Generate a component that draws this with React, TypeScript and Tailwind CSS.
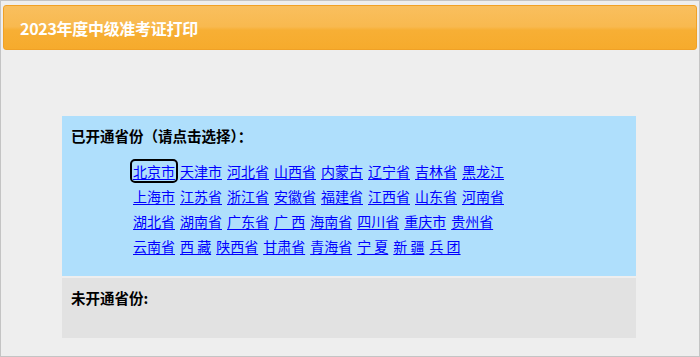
import React from "react";

const rows: string[][] = [
  ["北京市", "天津市", "河北省", "山西省", "内蒙古", "辽宁省", "吉林省", "黑龙江"],
  ["上海市", "江苏省", "浙江省", "安徽省", "福建省", "江西省", "山东省", "河南省"],
  ["湖北省", "湖南省", "广东省", "广\u00a0西", "海南省", "四川省", "重庆市", "贵州省"],
  ["云南省", "西\u00a0藏", "陕西省", "甘肃省", "青海省", "宁\u00a0夏", "新\u00a0疆", "兵\u00a0团"],
];

export default function App() {
  return (
    <div
      className="w-[700px] h-[357px] box-border border border-[#c4c4c4] bg-[#eeeeee] overflow-hidden"
      style={{ fontFamily: '"Noto Sans CJK SC", "Noto Sans", sans-serif' }}
    >
      <div className="pt-[4px] px-[2px]">
        <div className="h-[45px] rounded-[3px] border border-[#f0a126] bg-[linear-gradient(to_bottom,#f9bf5e_0%,#f8b94f_48%,#f7af35_56%,#f6ab2c_100%)] flex items-center pl-[16px]">
          <span className="text-white font-bold text-[16px] leading-none tracking-[-0.3px]">
            2023年度中级准考证打印
          </span>
        </div>
      </div>

      <div className="ml-[61px] mt-[66px] w-[574px]">
        <div className="h-[160px] bg-[#afdffc] pt-[10px] pl-[9px]">
          <div className="text-[14.5px] font-bold text-black leading-[20px]">
            已开通省份（请点击选择）：
          </div>
          <div className="pl-[62px] pt-[12px] flex flex-col">
            {rows.map((row, i) => (
              <div key={i} className="flex gap-[5px] h-[25px] items-center">
                {row.map((p, j) => (
                  <a
                    key={j}
                    href="#"
                    className={
                      "text-[14px] leading-[18px] text-[#0000ff] underline underline-offset-[2px] whitespace-pre " +
                      (i === 0 && j === 0
                        ? "outline-2 outline-black rounded-[2px] outline-offset-[1px]"
                        : "")
                    }
                  >
                    {p}
                  </a>
                ))}
              </div>
            ))}
          </div>
        </div>
        <div className="mt-[2px] h-[60px] bg-[#e2e2e2] pt-[10px] pl-[9px]">
          <div className="text-[14.5px] font-bold text-black leading-[20px]">未开通省份:</div>
        </div>
      </div>
    </div>
  );
}
